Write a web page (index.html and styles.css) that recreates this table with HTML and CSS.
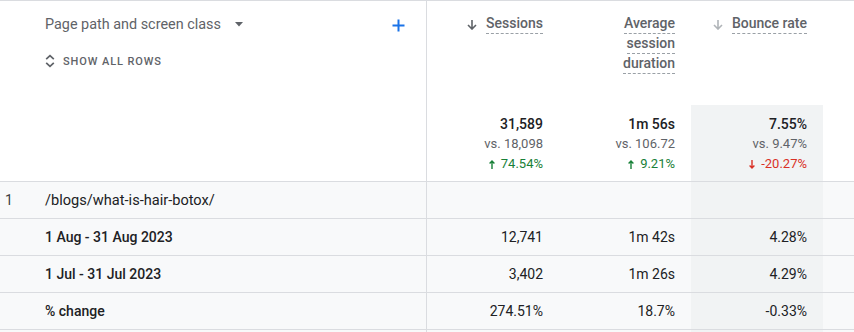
FILE: index.html
```html
<!DOCTYPE html>
<html>
<head>
<meta charset="utf-8">
<link rel="stylesheet" href="styles.css">
</head>
<body>
<div class="table">
  <div class="row head">
    <div class="dimcell">
      <div class="dimtitle">
        <span>Page path and screen class</span>
        <svg class="caret" width="8" height="5" viewBox="0 0 8 5"><path d="M0 0 L8 0 L4 4.5 Z" fill="#5f6368"/></svg>
        <svg class="add" width="13" height="13" viewBox="0 0 13 13"><path d="M6.5 0.5 V12.5 M0.5 6.5 H12.5" stroke="#1a73e8" stroke-width="2" fill="none"/></svg>
      </div>
      <div class="showall">
        <svg width="10" height="14" viewBox="0 0 10 14"><path d="M1.2 5.2 L5 1.6 L8.8 5.2 M1.2 8.8 L5 12.4 L8.8 8.8" stroke="#5f6368" stroke-width="1.7" fill="none"/></svg>
        <span>SHOW ALL ROWS</span>
      </div>
    </div>
    <div class="metric">
      <div class="mlabel">
        <svg class="sort" width="10" height="10" viewBox="0 0 10 10"><path d="M5 0 V9 M1 5 L5 9 L9 5" stroke="#5f6368" stroke-width="1.6" fill="none"/></svg>
        <div class="lines"><span>Sessions</span></div>
      </div>
      <div class="totals">
        <div class="tv">31,589</div>
        <div class="tc">vs. 18,098</div>
        <div class="tch up"><svg width="6" height="9" viewBox="0 0 6 9"><path d="M3 9 V1 M0.6 3.4 L3 1 L5.4 3.4" stroke="#188038" stroke-width="1.4" fill="none"/></svg>74.54%</div>
      </div>
    </div>
    <div class="metric">
      <div class="mlabel">
        <div class="lines"><span>Average</span><span>session</span><span>duration</span></div>
      </div>
      <div class="totals">
        <div class="tv">1m 56s</div>
        <div class="tc">vs. 106.72</div>
        <div class="tch up"><svg width="6" height="9" viewBox="0 0 6 9"><path d="M3 9 V1 M0.6 3.4 L3 1 L5.4 3.4" stroke="#188038" stroke-width="1.4" fill="none"/></svg>9.21%</div>
      </div>
    </div>
    <div class="metric">
      <div class="mlabel">
        <svg class="sort" width="10" height="10" viewBox="0 0 10 10"><path d="M5 0 V9 M1 5 L5 9 L9 5" stroke="#b0b4b8" stroke-width="1.6" fill="none"/></svg>
        <div class="lines"><span>Bounce rate</span></div>
      </div>
      <div class="totals hl">
        <div class="tv">7.55%</div>
        <div class="tc">vs. 9.47%</div>
        <div class="tch down"><svg width="6" height="9" viewBox="0 0 6 9"><path d="M3 0 V8 M0.6 5.6 L3 8 L5.4 5.6" stroke="#d93025" stroke-width="1.4" fill="none"/></svg>-20.27%</div>
      </div>
    </div>
    <div class="filler"></div>
  </div>

  <div class="row body">
    <div class="dim"><span class="idx">1</span><span class="path">/blogs/what-is-hair-botox/</span></div>
    <div class="num"></div>
    <div class="num"></div>
    <div class="num hl"></div>
    <div class="filler"></div>
  </div>
  <div class="row body">
    <div class="dim"><span class="idx"></span><span class="lbl">1 Aug - 31 Aug 2023</span></div>
    <div class="num">12,741</div>
    <div class="num">1m 42s</div>
    <div class="num hl">4.28%</div>
    <div class="filler"></div>
  </div>
  <div class="row body">
    <div class="dim"><span class="idx"></span><span class="lbl">1 Jul - 31 Jul 2023</span></div>
    <div class="num">3,402</div>
    <div class="num">1m 26s</div>
    <div class="num hl">4.29%</div>
    <div class="filler"></div>
  </div>
  <div class="row body">
    <div class="dim"><span class="idx"></span><span class="lbl">% change</span></div>
    <div class="num">274.51%</div>
    <div class="num">18.7%</div>
    <div class="num hl">-0.33%</div>
    <div class="filler"></div>
  </div>
  <div class="row body">
    <div class="dim"></div>
    <div class="num"></div>
    <div class="num"></div>
    <div class="num hl"></div>
    <div class="filler"></div>
  </div>
</div>
</body>
</html>
```
FILE: styles.css
```css
html, body {
  margin: 0;
  padding: 0;
  background: #ffffff;
  overflow: hidden;
}
body {
  font-family: Roboto, "Liberation Sans", Arial, sans-serif;
  color: #202124;
  width: 854px;
  height: 332px;
}
.table {
  border-top: 1px solid #dadce0;
}
.row {
  display: grid;
  grid-template-columns: 427px 132px 132px 132px 1fr;
  border-bottom: 1px solid #dadce0;
}
.head {
  height: 180px;
  background: #ffffff;
}
.dimcell {
  border-right: 1px solid #dadce0;
  padding-left: 45px;
  padding-right: 21px;
}
.dimtitle {
  display: flex;
  align-items: center;
  height: 20px;
  margin-top: 13px;
  font-size: 14.4px;
  color: #5f6368;
}
.caret {
  margin-left: 14px;
  margin-top: 1px;
}
.add {
  margin-left: auto;
  margin-top: 2px;
}
.showall {
  display: flex;
  align-items: center;
  margin-top: 20px;
  font-size: 11px;
  font-weight: 500;
  letter-spacing: 0.9px;
  color: #5f6368;
}
.showall svg {
  margin-right: 8px;
}
.metric {
  display: flex;
  flex-direction: column;
}
.mlabel {
  height: 104px;
  display: flex;
  justify-content: flex-end;
  align-items: flex-start;
  padding-right: 16px;
  padding-top: 14px;
  box-sizing: border-box;
}
.sort {
  margin-top: 5px;
  margin-right: 9px;
}
.lines {
  display: flex;
  flex-direction: column;
  align-items: flex-end;
}
.lines span {
  display: inline-block;
  font-size: 14px;
  font-weight: 500;
  line-height: 16px;
  color: #5f6368;
  padding-bottom: 2px;
  border-bottom: 1px dashed #9aa0a6;
  margin-bottom: 1px;
}
.totals {
  flex: 1;
  padding: 9px 16px 0 0;
  text-align: right;
  line-height: 20px;
}
.tv {
  font-size: 14px;
  font-weight: 500;
  color: #202124;
}
.tc {
  font-size: 13px;
  color: #5f6368;
}
.tch {
  font-size: 13px;
  display: flex;
  justify-content: flex-end;
  align-items: center;
}
.tch svg {
  margin-right: 6px;
}
.up { color: #188038; }
.down { color: #d93025; }
.hl {
  background: #f1f3f4;
}
.body {
  height: 36px;
  background: #f8f9fa;
  font-size: 14px;
  line-height: 36px;
}
.dim {
  display: flex;
  border-right: 1px solid #dadce0;
}
.idx {
  width: 40px;
  padding-left: 5px;
  color: #3c4043;
}
.path {
  font-size: 14.6px;
}
.lbl {
  font-weight: 500;
}
.num {
  text-align: right;
  padding-right: 16px;
}
```
